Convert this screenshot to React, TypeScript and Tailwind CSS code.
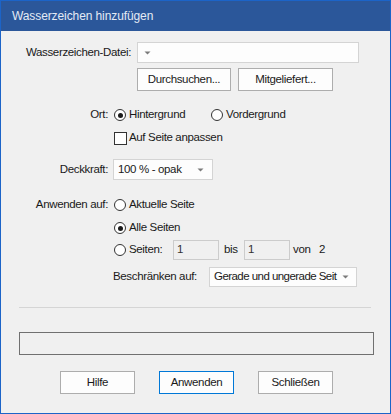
import type { ReactNode } from 'react';

const font = { fontFamily: '"Liberation Sans", Arial, sans-serif' };

function Arrow() {
  return (
    <svg width="7" height="4" viewBox="0 0 7 4" className="shrink-0">
      <path d="M0.5 0.5 L6.5 0.5 L3.5 3.5 Z" fill="#7a7a7a" />
    </svg>
  );
}

function Radio({ checked }: { checked?: boolean }) {
  return (
    <span className="flex h-[12px] w-[12px] shrink-0 items-center justify-center rounded-full border border-[#333333] bg-white">
      {checked && <span className="h-[5px] w-[5px] rounded-full bg-[#1a1a1a]" />}
    </span>
  );
}

function Btn({ children, primary, w = 'w-[75px]' }: { children: ReactNode; primary?: boolean; w?: string }) {
  return (
    <div
      className={`flex h-[23px] items-center justify-center bg-[#fdfdfd] border ${w} ${
        primary ? 'border-[#0078d7]' : 'border-[#adadad]'
      }`}
    >
      {children}
    </div>
  );
}

export default function App() {
  return (
    <div
      className="flex h-[414px] w-[391px] flex-col border border-[#1c64c8] bg-[#f0f0f0] text-[11.5px] leading-none tracking-[-0.35px] text-[#1a1a1a]"
      style={font}
    >
      {/* Titelleiste */}
      <div className="flex h-[30px] shrink-0 items-center bg-[#2b579a] px-[11px] text-[12px] tracking-[-0.1px] text-[#e3eaf5]">
        Wasserzeichen hinzufügen
      </div>

      {/* Datei */}
      <div className="mt-[11px] flex h-[21px] items-center">
        <div className="w-[130px] text-right">Wasserzeichen-Datei:</div>
        <div className="ml-[6px] flex h-[21px] w-[222px] items-center border border-[#d4d4d4] bg-[#fdfdfd] pl-[6px]">
          <Arrow />
        </div>
      </div>
      <div className="mt-[5px] flex gap-[7px] pl-[136px]">
        <Btn w="w-[94px]">Durchsuchen...</Btn>
        <Btn w="w-[95px]">Mitgeliefert...</Btn>
      </div>

      {/* Ort */}
      <div className="mt-[14px] flex h-[20px] items-center">
        <div className="w-[107px] text-right">Ort:</div>
        <div className="ml-[6px] flex w-[97px] items-center gap-[3px]">
          <Radio checked />
          <span>Hintergrund</span>
        </div>
        <div className="flex items-center gap-[3px]">
          <Radio />
          <span>Vordergrund</span>
        </div>
      </div>
      <div className="mt-[3px] flex h-[20px] items-center gap-[2px] pl-[113px]">
        <span className="h-[13px] w-[13px] border border-[#333333] bg-white" />
        <span>Auf Seite anpassen</span>
      </div>

      {/* Deckkraft */}
      <div className="mt-[11px] flex h-[21px] items-center">
        <div className="w-[107px] text-right">Deckkraft:</div>
        <div className="ml-[5px] flex h-[21px] w-[100px] items-center justify-between border border-[#d4d4d4] bg-[#fdfdfd] pl-[4px] pr-[8px]">
          <span>100 % - opak</span>
          <Arrow />
        </div>
      </div>

      {/* Anwenden auf */}
      <div className="mt-[15px] flex h-[20px] items-center">
        <div className="w-[107px] text-right">Anwenden auf:</div>
        <div className="ml-[6px] flex items-center gap-[3px]">
          <Radio />
          <span>Aktuelle Seite</span>
        </div>
      </div>
      <div className="mt-[3px] flex h-[20px] items-center gap-[3px] pl-[113px]">
        <Radio checked />
        <span>Alle Seiten</span>
      </div>
      <div className="mt-[2px] flex h-[20px] items-center pl-[113px]">
        <Radio />
        <span className="ml-[3px] w-[44px]">Seiten:</span>
        <div className="flex h-[20px] w-[46px] items-center border border-[#cccccc] pl-[3px] text-[#333]">1</div>
        <span className="ml-[5px] w-[20px]">bis</span>
        <div className="flex h-[20px] w-[46px] items-center border border-[#cccccc] pl-[3px] text-[#333]">1</div>
        <span className="ml-[3px] w-[26px]">von</span>
        <span>2</span>
      </div>
      <div className="mt-[7px] flex h-[20px] items-center pl-[112px]">
        <span className="w-[96px]">Beschränken auf:</span>
        <div className="flex h-[20px] w-[148px] items-center justify-between border border-[#d4d4d4] bg-[#fdfdfd] pl-[4px] pr-[7px]">
          <span className="whitespace-nowrap tracking-[-0.55px]">Gerade und ungerade Seit</span>
          <Arrow />
        </div>
      </div>

      {/* Trennlinie */}
      <div className="mx-[18px] mt-[20px] h-px w-[352px] bg-[#d5d5d5]" />

      {/* Fortschritt */}
      <div className="mx-[18px] mt-[24px] h-[23px] w-[355px] border border-[#707070]" />

      {/* Schaltflächen */}
      <div className="mt-[16px] flex justify-center gap-[24px] pl-[2px]">
        <Btn>Hilfe</Btn>
        <Btn primary>Anwenden</Btn>
        <Btn>Schließen</Btn>
      </div>
    </div>
  );
}
